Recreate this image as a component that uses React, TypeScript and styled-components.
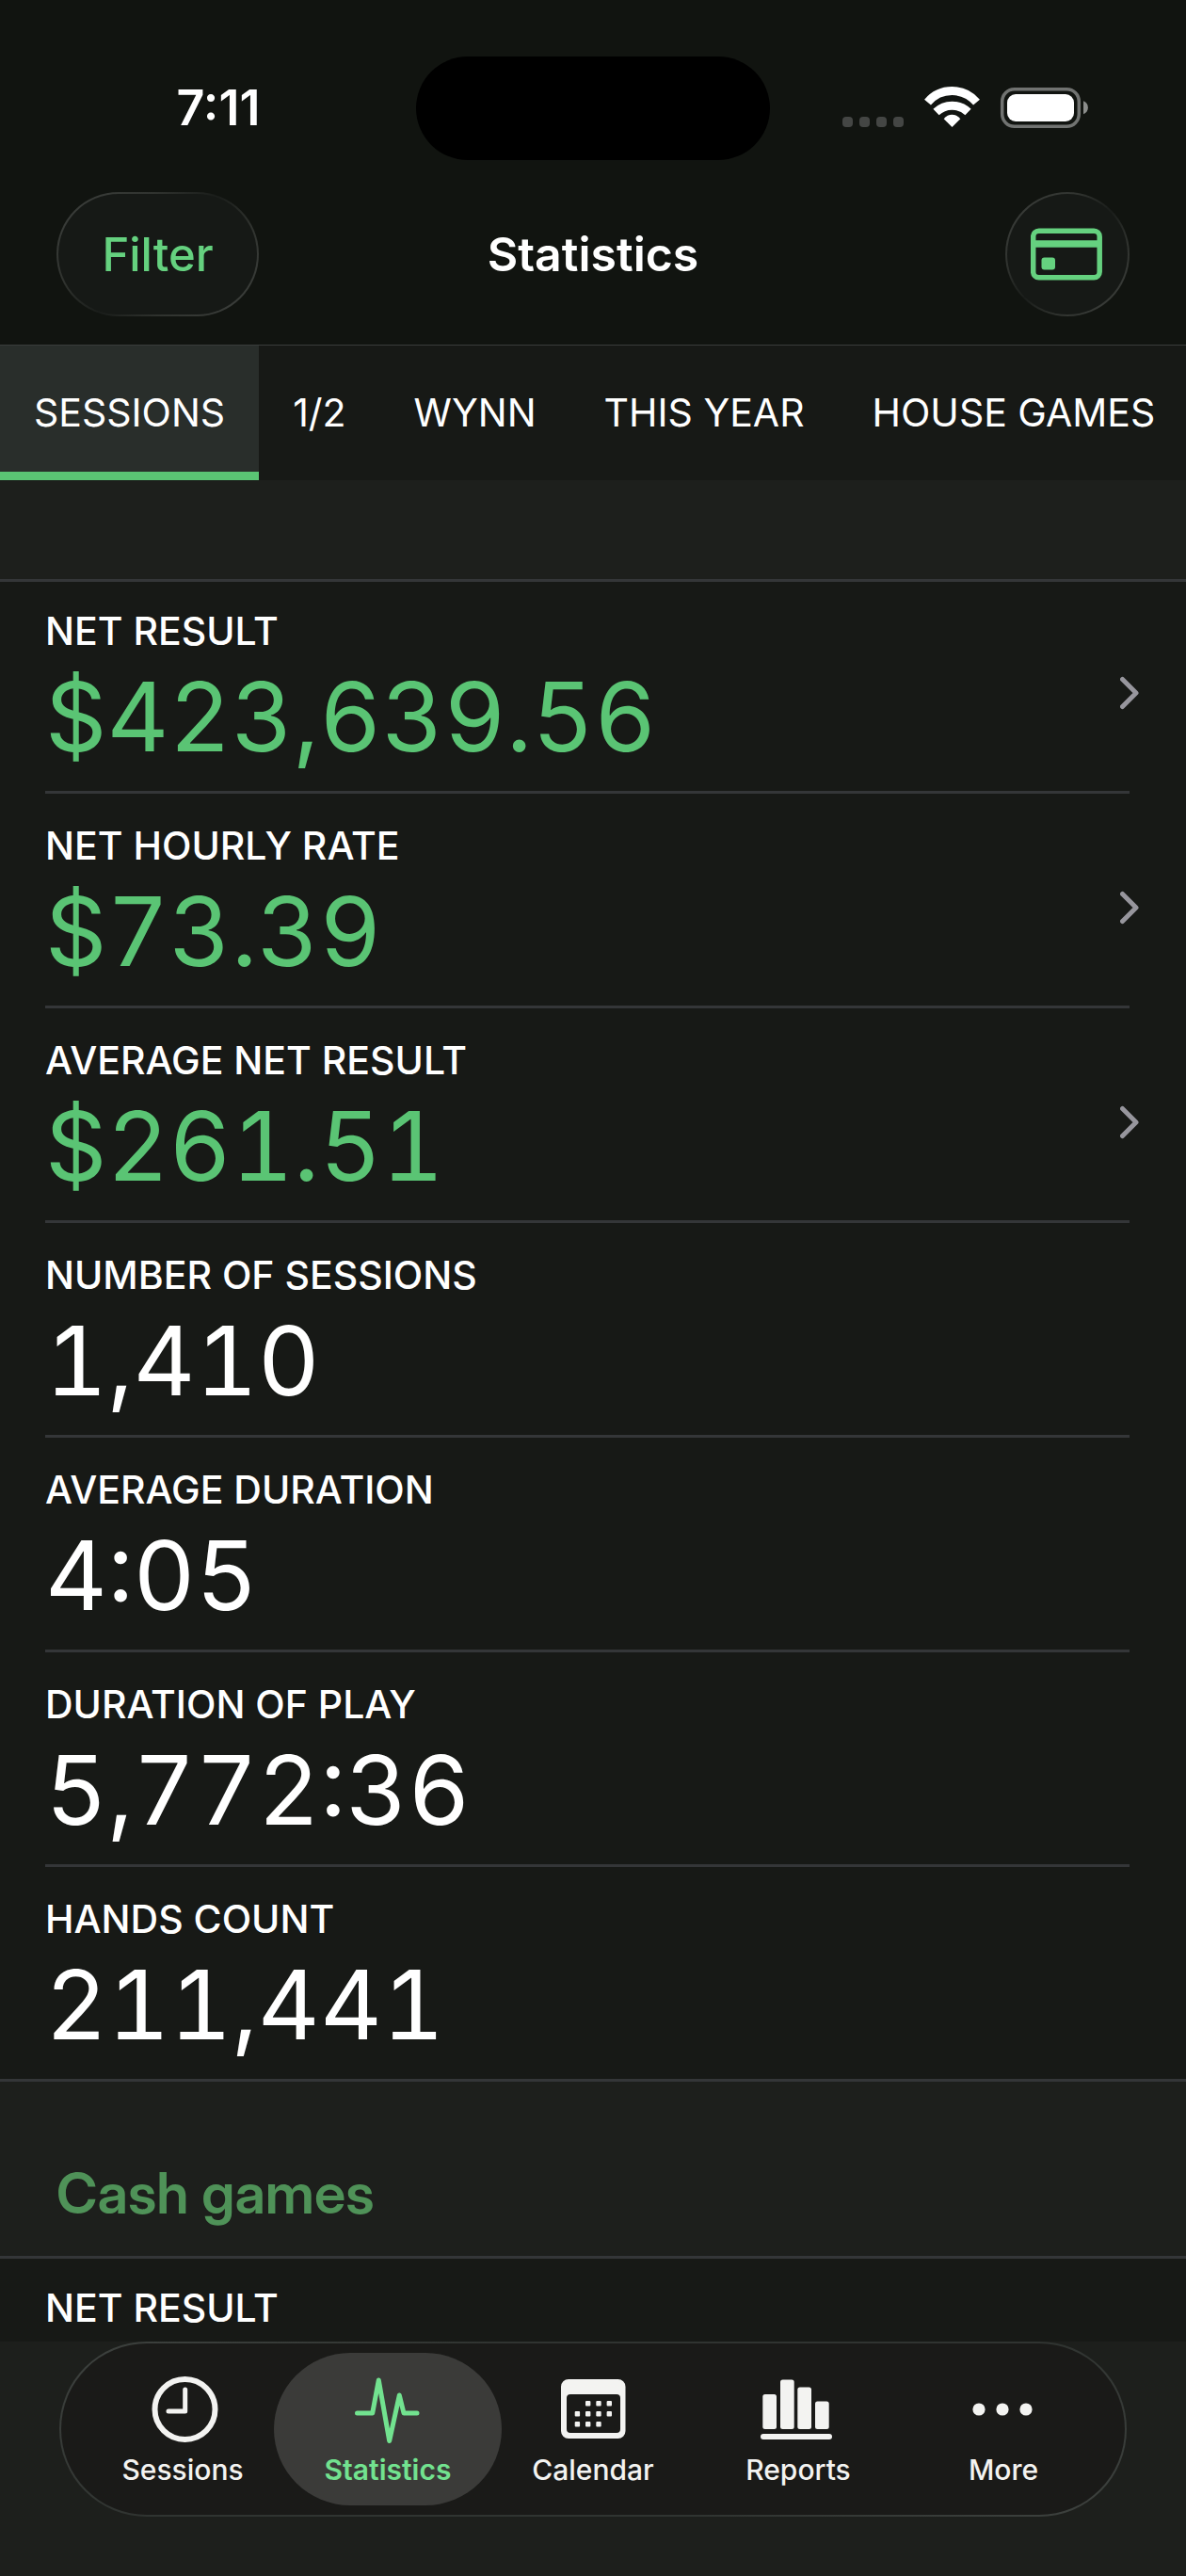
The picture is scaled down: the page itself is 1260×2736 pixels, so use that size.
import React from "react";
import styled, { createGlobalStyle } from "styled-components";

const Global = createGlobalStyle`
  * { box-sizing: border-box; }
  html { background: #1d1f1c; }
  body { margin: 0; font-family: Inter, "Liberation Sans", sans-serif; color: #fff; }
  button { font: inherit; color: inherit; background: none; border: 0; padding: 0; margin: 0; cursor: pointer; }
  svg { display: block; flex: none; }
`;

const Screen = styled.div`
  min-height: 100vh;
  display: flex;
  flex-direction: column;
  background: #1d1f1c;
`;

const Top = styled.header`
  background: #111410;
  border-bottom: 1px solid #3a3d3b;
`;

const StatusBar = styled.div`
  display: grid;
  grid-template-columns: 1fr 376px 1fr;
  align-items: center;
  height: 170px;
  padding-top: 60px;
`;

const Clock = styled.time`
  padding-left: 22px;
  font-size: 52px;
  line-height: 64px;
  font-weight: 600;
  text-align: center;
`;

const Island = styled.div`
  height: 110px;
  border-radius: 55px;
  background: #000;
`;

const StatusIcons = styled.div`
  display: flex;
  padding-left: 77px;
`;

const TitleBar = styled.div`
  display: grid;
  grid-template-columns: 1fr auto 1fr;
  align-items: center;
  padding: 34px 60px 30px;
`;

const GlassButton = styled.button<{ $round?: boolean }>`
  display: flex;
  align-items: center;
  justify-content: center;
  height: 132px;
  width: ${(p) => (p.$round ? "132px" : "215px")};
  justify-self: ${(p) => (p.$round ? "end" : "start")};
  border: 2px solid transparent;
  border-radius: 66px;
  background:
    linear-gradient(#161916, #161916) padding-box,
    linear-gradient(135deg, #3e413e, #30332f 30%, #1a1d1a 50%, #30332f 70%, #3e413e) border-box;
  color: #65d17f;
  font-size: 49px;
  font-weight: 500;
`;

const Title = styled.h1`
  margin: 0;
  font-size: 50px;
  line-height: 60px;
  font-weight: 600;
`;

const Tabs = styled.nav`
  display: flex;
  overflow: hidden;
  background: #171916;
`;

const Tab = styled.button<{ $active?: boolean }>`
  flex: none;
  height: 143px;
  padding: 8px 36px 0;
  border-bottom: 9px solid ${(p) => (p.$active ? "#5ac474" : "transparent")};
  background: ${(p) => (p.$active ? "#292e2b" : "transparent")};
  font-size: 41px;
  line-height: 48px;
  white-space: nowrap;
`;

const Spacer = styled.div`
  height: 105px;
`;

const GroupTitle = styled.h2`
  margin: 0;
  padding: 82px 60px 30px;
  font-family: "Inter Display", Inter, sans-serif;
  font-size: 60px;
  line-height: 73px;
  font-weight: 600;
  color: #4f9258;
`;

const Group = styled.dl<{ $open?: boolean }>`
  margin: 0;
  padding-left: 48px;
  background: #171916;
  box-shadow: inset 0 3px #343638;
  border-bottom: ${(p) => (p.$open ? "0" : "3px solid #343638")};
`;

const Row = styled.div`
  display: grid;
  grid-template-columns: 1fr auto;
  height: 228px;
  margin-right: 60px;
  border-bottom: 3px solid #343638;
  &:last-child { height: 225px; border-bottom: 0; }
`;

const Figures = styled.div`
  padding-top: 30px;
`;

const Label = styled.dt`
  font-size: 41px;
  line-height: 50px;
  font-weight: 500;
`;

const Value = styled.dd<{ $positive?: boolean }>`
  margin: 0;
  font-size: 102px;
  line-height: 132px;
  font-weight: 400;
  font-feature-settings: "tnum";
  color: ${(p) => (p.$positive ? "#5ac474" : "#fff")};
`;

const Arrow = styled.span`
  align-self: center;
  margin-right: -12px;
  padding-top: 16px;
`;

const PartialRow = styled.div`
  height: 91px;
  padding-top: 30px;
`;

const Footer = styled.footer`
  padding: 0 63px 63px;
`;

const TabBar = styled.nav`
  display: grid;
  grid-template-columns: repeat(5, 1fr);
  height: 186px;
  padding: 10px 20px;
  border: 2px solid transparent;
  border-radius: 93px;
  background:
    linear-gradient(#1a1a18, #1a1a18) padding-box,
    linear-gradient(155deg, #3e423f, #303431 30%, #303431 70%, #3e423f) border-box;
`;

const NavItem = styled.button<{ $active?: boolean }>`
  display: flex;
  flex-direction: column;
  align-items: center;
  gap: 6px;
  margin: 0 ${(p) => (p.$active ? "-12px" : "0")};
  padding-top: 20px;
  border-radius: 81px;
  background: ${(p) => (p.$active ? "#3b3b39" : "transparent")};
  color: ${(p) => (p.$active ? "#72e28f" : "#f3f3f1")};
  font-size: 30px;
  line-height: 36px;
  font-weight: ${(p) => (p.$active ? 600 : 500)};
`;

const StatusGlyphs = () => (
  <svg width="262" height="60" viewBox="0 0 262 60">
    <g fill="#444644">
      {[0, 18, 36, 54].map((x) => <rect key={x} x={x} y="39" width="11" height="11" rx="4" />)}
    </g>
    <g fill="none" stroke="#fff" strokeWidth="9">
      <path d="M90.500 23.700A34 34 0 0 1 142.500 23.700" />
      <path d="M99.500 34A24.600 24.600 0 0 1 133.500 34" />
    </g>
    <path d="M116.500 50L107.700 41.200C112.500 35.300 120.500 35.300 125.300 41.200Z" fill="#fff" />
    <rect x="169.700" y="9.700" width="81.600" height="39.600" rx="13" fill="none" stroke="#717371" strokeWidth="3.500" />
    <rect x="175" y="15" width="71" height="29" rx="9" fill="#fff" />
    <path d="M256 22.300C262.500 24.500 262.500 34 256 36.300Z" fill="#8b8d8b" />
  </svg>
);

const CardIcon = () => (
  <svg width="78" height="56" viewBox="0 0 78 56" fill="none">
    <rect x="2.700" y="3.200" width="70.500" height="49.500" rx="6" stroke="currentColor" strokeWidth="5.500" />
    <path d="M3 17H73" stroke="currentColor" strokeWidth="7.500" />
    <rect x="11.500" y="31.500" width="14.500" height="13" rx="3" fill="currentColor" />
  </svg>
);

const Chevron = () => (
  <svg width="22" height="36" viewBox="0 0 22 36" fill="none" stroke="#97969d" strokeWidth="5" strokeLinecap="round" strokeLinejoin="round">
    <path d="M2.500 3.500L17 18L2.500 32.500" />
  </svg>
);

const ClockIcon = () => (
  <svg width="80" height="80" viewBox="0 0 80 80" fill="none" stroke="currentColor" strokeLinecap="round" strokeLinejoin="round">
    <circle cx="42.500" cy="40" r="32" strokeWidth="6" />
    <path d="M42.700 19V42H25" strokeWidth="5" />
  </svg>
);

const PulseIcon = () => (
  <svg width="80" height="80" viewBox="0 0 80 80" fill="none" stroke="currentColor" strokeWidth="5" strokeLinecap="round" strokeLinejoin="round">
    <path d="M7.500 44H23.700L30.300 9L41.700 73.500L52.300 25L57 44H71" />
  </svg>
);

const dayDots = [
  [1, 0], [2, 0], [3, 0],
  [0, 1], [1, 1], [2, 1], [3, 1],
  [0, 2], [1, 2], [2, 2],
];

const CalendarIcon = () => (
  <svg width="80" height="80" viewBox="0 0 80 80" fill="currentColor">
    <path fillRule="evenodd" d="M14 8H66.500a8 8 0 0 1 8 8V63a8 8 0 0 1-8 8H14a8 8 0 0 1-8-8V16a8 8 0 0 1 8-8zM16 24a4 4 0 0 0-4 4V61a4 4 0 0 0 4 4H65a4 4 0 0 0 4-4V28a4 4 0 0 0-4-4z" />
    {dayDots.map(([c, r]) => (
      <rect key={`${c}-${r}`} x={20.700 + c * 11.300} y={31 + r * 11} width="5.400" height="5.400" rx="1" />
    ))}
  </svg>
);

const BarsIcon = () => (
  <svg width="80" height="80" viewBox="0 0 80 80" fill="currentColor">
    <rect x="2.300" y="24" width="14.700" height="37" rx="2.500" />
    <rect x="21" y="8.500" width="14.700" height="52.500" rx="2.500" />
    <rect x="39.300" y="16.500" width="14.700" height="44.500" rx="2.500" />
    <rect x="58" y="31.500" width="14.700" height="29.500" rx="2.500" />
    <rect x="0" y="66" width="76" height="6" rx="3" />
  </svg>
);

const DotsIcon = () => (
  <svg width="80" height="80" viewBox="0 0 80 80" fill="currentColor">
    <circle cx="14" cy="40" r="6.600" />
    <circle cx="39" cy="40" r="6.600" />
    <circle cx="64" cy="40" r="6.600" />
  </svg>
);

const tabs = ["SESSIONS", "1/2", "WYNN", "THIS YEAR", "HOUSE GAMES"];

const stats = [
  { label: "NET RESULT", value: "$423,639.56", link: true },
  { label: "NET HOURLY RATE", value: "$73.39", link: true },
  { label: "AVERAGE NET RESULT", value: "$261.51", link: true },
  { label: "NUMBER OF SESSIONS", value: "1,410" },
  { label: "AVERAGE DURATION", value: "4:05" },
  { label: "DURATION OF PLAY", value: "5,772:36" },
  { label: "HANDS COUNT", value: "211,441" },
];

const nav = [
  { label: "Sessions", Icon: ClockIcon },
  { label: "Statistics", Icon: PulseIcon },
  { label: "Calendar", Icon: CalendarIcon },
  { label: "Reports", Icon: BarsIcon },
  { label: "More", Icon: DotsIcon },
];

export default function App() {
  return (
    <Screen>
      <Global />
      <Top>
        <StatusBar>
          <Clock>7:11</Clock>
          <Island />
          <StatusIcons><StatusGlyphs /></StatusIcons>
        </StatusBar>
        <TitleBar>
          <GlassButton>Filter</GlassButton>
          <Title>Statistics</Title>
          <GlassButton $round><CardIcon /></GlassButton>
        </TitleBar>
      </Top>
      <Tabs>
        {tabs.map((t, i) => <Tab key={t} $active={i === 0}>{t}</Tab>)}
      </Tabs>
      <main>
        <Spacer />
        <Group>
          {stats.map((s) => (
            <Row key={s.label}>
              <Figures>
                <Label>{s.label}</Label>
                <Value $positive={s.link}>{s.value}</Value>
              </Figures>
              {s.link && <Arrow><Chevron /></Arrow>}
            </Row>
          ))}
        </Group>
        <GroupTitle>Cash games</GroupTitle>
        <Group $open>
          <PartialRow><Label>NET RESULT</Label></PartialRow>
        </Group>
      </main>
      <Footer>
        <TabBar>
          {nav.map(({ label, Icon }, i) => (
            <NavItem key={label} $active={i === 1}><Icon />{label}</NavItem>
          ))}
        </TabBar>
      </Footer>
    </Screen>
  );
}
